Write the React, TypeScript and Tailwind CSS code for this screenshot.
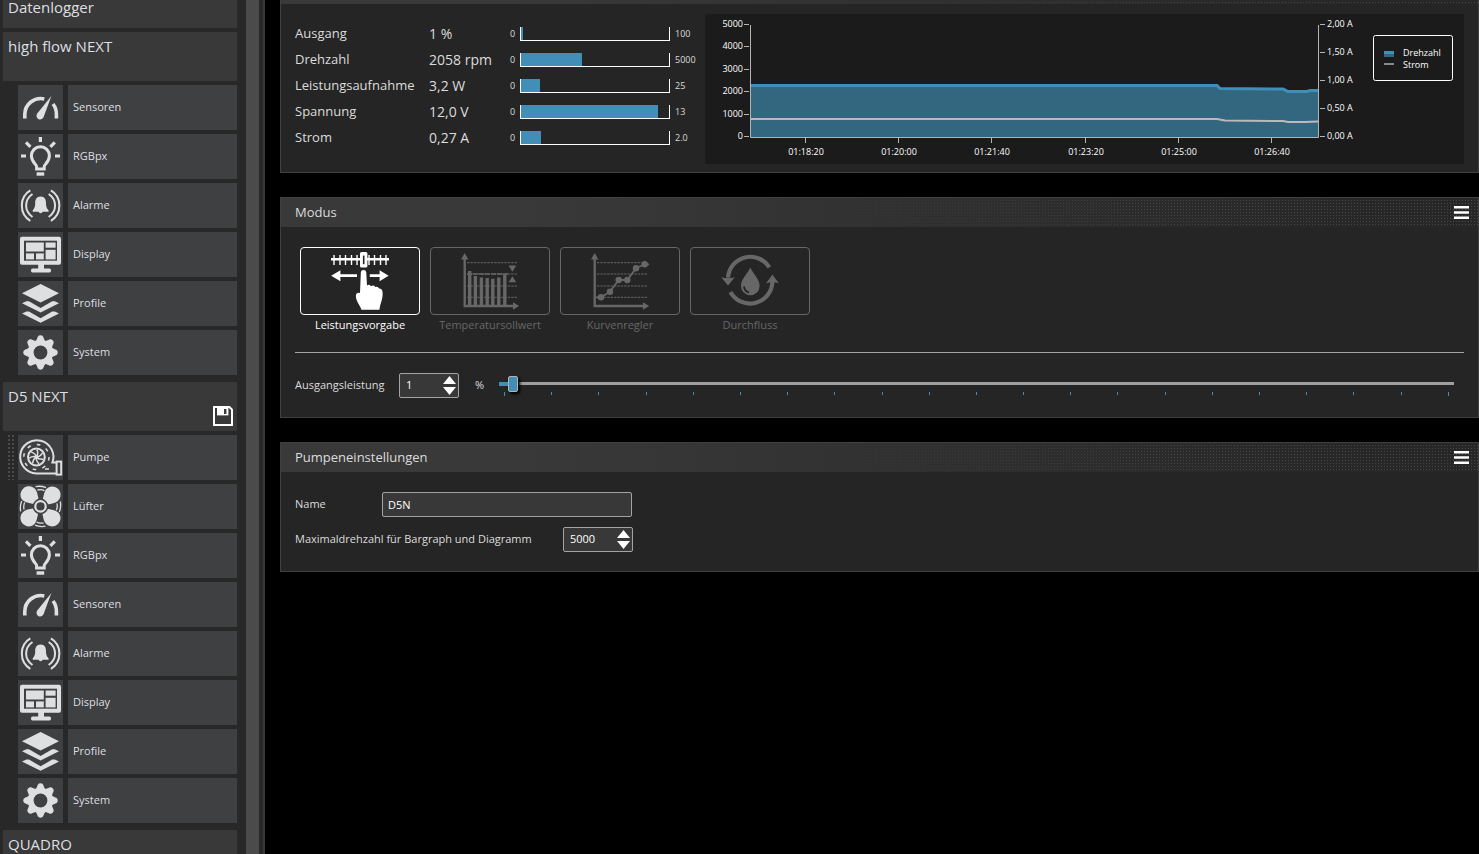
import { useState } from "react";
import type { ReactNode } from "react";

const GaugeIcon = () => (
  <svg viewBox="0 0 45 45" className="size-[45px]" fill="none" stroke="currentColor" strokeWidth="3.6">
    <path d="M6.8 33.5V29.5A16 16 0 0 1 26.3 13.9M35 19A16 16 0 0 1 38.4 29.5V33.5" />
    <path d="M33.4 11 25.8 31.6A3.7 3.7 0 1 1 19.2 28.6Z" fill="currentColor" stroke="none" />
  </svg>
);

const BulbIcon = () => (
  <svg viewBox="0 0 45 45" className="size-[45px]" fill="none" stroke="currentColor" strokeWidth="3">
    <path d="M18.6 35V32.5C18.6 30.5 13.4 28 13.4 21.7A9 9 0 0 1 31.4 21.7C31.4 28 26.2 30.5 26.2 32.5V35Z" />
    <path d="M18.6 40H26.2" strokeWidth="3.4" />
    <path d="M22.4 3V8M3 22H8M37 22H42M8 8.4 12.4 12.8M36.8 8.4 32.4 12.8" strokeWidth="3.2" />
  </svg>
);

const AlarmIcon = () => (
  <svg viewBox="0 0 45 45" className="size-[45px]" fill="none" stroke="currentColor" strokeWidth="2">
    <path d="M12.3 7.3C1 14 1 31 12.3 37.8M14.5 11C6 17 6 28 14.5 34M32.9 7.3C44.2 14 44.2 31 32.9 37.8M30.7 11C39.2 17 39.2 28 30.7 34" />
    <path
      d="M22.6 13.4C18.4 13.4 17.2 16.8 17.2 20C17.2 24 16.4 25.2 14.7 27.4V28.8H20.6A2.1 2.1 0 0 0 24.6 28.8H30.6V27.4C28.8 25.2 28 24 28 20C28 16.8 26.8 13.4 22.6 13.4Z"
      fill="currentColor"
      stroke="none"
    />
  </svg>
);

const DisplayIcon = () => (
  <svg viewBox="0 0 45 45" className="size-[45px]" fill="currentColor">
    <rect x="2" y="4.7" width="41" height="28" rx="2" />
    <rect x="6" y="8.7" width="33" height="20" className="fill-[#3f4042]" />
    <rect x="8" y="10.5" width="17.8" height="9" />
    <rect x="27.6" y="10.5" width="10" height="5.2" />
    <rect x="27.6" y="17.8" width="10" height="9.6" />
    <rect x="8" y="21.4" width="8" height="6" />
    <rect x="18" y="21.4" width="7.8" height="6" />
    <path d="M20.2 32H26V37H20.2Z" />
    <rect x="13" y="36.6" width="20" height="3.8" rx="1.6" />
  </svg>
);

const LayersIcon = () => (
  <svg viewBox="0 0 45 45" className="size-[45px]" fill="currentColor">
    <path d="M22.6 3 41 12.3 22.6 21.4 4 12.3Z" />
    <path d="M4 22.3 8.4 20.3H11L22.6 27 34.2 20.3H36.8L41 22.3 22.6 31.5Z" />
    <path d="M4 32.6 8.4 30.6H11L22.6 37.3 34.2 30.6H36.8L41 32.6 22.6 41.8Z" />
  </svg>
);

const GearIcon = () => (
  <svg viewBox="0 0 45 45" className="size-[45px]" fill="currentColor">
    <circle cx="22.5" cy="22.5" r="9.8" fill="none" stroke="currentColor" strokeWidth="5.8" />
    {[0, 45, 90, 135, 180, 225, 270, 315].map((a) => (
      <path key={a} d="M17.8 11.4 20 6.4Q20.6 5.3 22.5 5.3Q24.4 5.3 25 6.4L27.2 11.4Z" transform={`rotate(${a} 22.5 22.5)`} />
    ))}
  </svg>
);

const PumpIcon = () => (
  <svg viewBox="0 0 45 45" className="size-[45px]" fill="none" stroke="currentColor" strokeWidth="2">
    <path d="M38 38.5H18.4A16.6 16.6 0 1 1 34.4 27.6H38" />
    <rect x="38.6" y="26.6" width="4.6" height="13" />
    <circle cx="18.4" cy="22" r="8.4" />
    <circle cx="18.4" cy="22" r="12.6" strokeWidth="1.5" strokeDasharray="3.6 6.3" />
    <circle cx="18.4" cy="22" r="2" fill="currentColor" stroke="none" />
    {[0, 51, 103, 154, 206, 257, 309].map((a) => (
      <path key={a} d="M18.4 22Q20.6 19 19 14.6" strokeWidth="1.5" transform={`rotate(${a} 18.4 22)`} />
    ))}
    <path d="M27 34H31" strokeWidth="1.5" />
  </svg>
);

const FanIcon = () => (
  <svg viewBox="0 0 45 45" className="size-[45px]" fill="none" stroke="currentColor">
    {[0, 90, 180, 270].map((a) => (
      <g key={a} transform={`rotate(${a} 22.5 22.4)`}>
        <path
          d="M23 21C20 17 20.6 12 18.4 7C16 2 9.4 1 5.6 4.2C1.6 7.6 1.4 13.6 5.4 16.8C9.6 20 17 19 21 23Z"
          fill="currentColor"
          stroke="none"
        />
        <path d="M17.6 2.6Q23 1.6 28 3.6M19.4 6Q23 5 26.4 6.6" strokeWidth="1.3" />
      </g>
    ))}
    <circle cx="22.5" cy="22.4" r="7.8" className="fill-[#3f4042]" stroke="none" />
    <circle cx="22.5" cy="22.4" r="5.2" strokeWidth="2.2" />
  </svg>
);

const SaveIcon = () => (
  <svg viewBox="0 0 20 20" className="size-5" fill="none" stroke="#fff" strokeWidth="2">
    <path d="M1 1H16.4L19 3.6V19H1Z" />
    <path d="M4 1H15.4V9.4H4Z" fill="#fff" stroke="none" />
    <path d="M11 3H13.4V8H11Z" className="fill-[#393939]" stroke="none" />
  </svg>
);

const ManualIcon = () => (
  <svg viewBox="0 0 118 66" className="w-full" fill="currentColor" stroke="none">
    <path d="M30 11.2H88" stroke="currentColor" strokeWidth="2.6" />
    <path d="M33 7V17M39 7V17M44.5 7V17M50.5 7V17M56 7V17M68 7V17M73.5 7V17M79.5 7V17M85 7V17" stroke="currentColor" strokeWidth="1.4" />
    <rect x="59" y="4" width="7.4" height="15.6" rx="1.6" />
    <rect x="61.9" y="7.6" width="1.6" height="8.6" className="fill-[#252525]" />
    <path d="M30.2 27.7 39.4 22.2V26.3H56V29.1H39.4V33.2ZM87.6 27.7 78.6 22.2V26.3H68.8V29.1H78.6V33.2Z" />
    <path d="M59.8 25Q59.8 22 62.5 22Q65.2 22 65.3 25L66 37.4Q68 36 70 38.2Q72.6 36.6 74.4 39Q76.8 38 78.2 40.4Q81.4 40.4 81.6 44.6C82 51 79.4 55 78.4 61.8H60.4C59.6 57.6 54 52.6 55 46.4Q56 44 59 45Z" />
  </svg>
);

const Axes = () => (
  <>
    <path d="M33.7 9V58H84" fill="none" stroke="currentColor" strokeWidth="2.4" />
    <path d="M33.7 5 37.4 11.4H30ZM88.2 58 82 54.2V61.8Z" />
    <path d="M36 14.7H87M36 26H87M36 38H87M36 49.3H87" fill="none" stroke="currentColor" strokeWidth="1" strokeDasharray="2.4 1" />
  </>
);

const TargetIcon = () => (
  <svg viewBox="0 0 118 66" className="w-full" fill="currentColor">
    <Axes />
    <path
      d="M38.7 57V23M44.4 57V28M50.4 57V29.4M56.2 57V30M61.8 57V30.8M67.8 57V29.4M73.8 57V26.4"
      stroke="currentColor"
      strokeWidth="3.4"
    />
    <path d="M36 26H78" stroke="currentColor" strokeWidth="1.4" strokeDasharray="5 1" />
    <path d="M77.6 17.4H85.2L81.4 23.8ZM77.6 34.2H85.2L81.4 28.2Z" />
  </svg>
);

const CurveIcon = () => (
  <svg viewBox="0 0 118 66" className="w-full" fill="currentColor">
    <Axes />
    <path d="M35 49.3H40L49 43.7 57.7 32H66.3L75 20.3 83.7 16.3H88" fill="none" stroke="currentColor" strokeWidth="1.8" />
    <circle cx="40" cy="49.3" r="3.2" />
    <circle cx="49" cy="43.7" r="3.2" />
    <circle cx="57.7" cy="32" r="3.2" />
    <circle cx="66.3" cy="32" r="3.2" />
    <circle cx="75" cy="20.3" r="3.2" />
    <circle cx="83.7" cy="16.3" r="3.2" />
  </svg>
);

const FlowIcon = () => (
  <svg viewBox="0 0 118 66" className="w-full" fill="currentColor">
    <path d="M78.4 19.4A22.4 22.4 0 0 0 37 29.6M39.4 44A22.4 22.4 0 0 0 81.4 34" fill="none" stroke="currentColor" strokeWidth="4.2" />
    <path d="M30.2 29.2Q36.8 31 43.8 29.2L37 37.6ZM75 35.4Q81.4 33 88 35.4L81.4 26.6Z" />
    <path d="M59.3 19.6C62 26 68.6 31 68.6 38A9.3 9.3 0 0 1 50 38C50 31 56.6 26 59.3 19.6Z" />
    <path d="M53 38.4Q53.4 43.4 58 44.4" fill="none" stroke="#252525" strokeWidth="1.8" />
  </svg>
);

type NavEntry = { label: string; icon: () => ReactNode };

const highFlow: NavEntry[] = [
  { label: "Sensoren", icon: GaugeIcon },
  { label: "RGBpx", icon: BulbIcon },
  { label: "Alarme", icon: AlarmIcon },
  { label: "Display", icon: DisplayIcon },
  { label: "Profile", icon: LayersIcon },
  { label: "System", icon: GearIcon },
];

const d5Next: NavEntry[] = [
  { label: "Pumpe", icon: PumpIcon },
  { label: "Lüfter", icon: FanIcon },
  { label: "RGBpx", icon: BulbIcon },
  { label: "Sensoren", icon: GaugeIcon },
  { label: "Alarme", icon: AlarmIcon },
  { label: "Display", icon: DisplayIcon },
  { label: "Profile", icon: LayersIcon },
  { label: "System", icon: GearIcon },
];

const DeviceHeader = ({ name, children }: { name: string; children?: ReactNode }) => (
  <div className="flex h-[49px] shrink-0 justify-between bg-[#393939] pl-[5px] pr-1 pt-1">
    <h2 className="text-[15px] leading-5">{name}</h2>
    {children}
  </div>
);

const NavRow = ({ entry, active }: { entry: NavEntry; active?: boolean }) => {
  const Icon = entry.icon;
  return (
    <li className="flex">
      <span
        className={
          active
            ? "ml-[5px] mr-1 w-[6px] bg-[conic-gradient(at_2px_2px,transparent_75%,#4a4a4a_0)] bg-size-[4px_4px]"
            : "ml-[5px] mr-1 w-[6px]"
        }
      />
      <a href="#" className="flex flex-1 gap-[5px] text-[11px]">
        <span className="size-[45px] bg-[#3f4042]">
          <Icon />
        </span>
        <span className="flex flex-1 items-center bg-[#3f4042] px-[5px]">{entry.label}</span>
      </a>
    </li>
  );
};

const Sidebar = () => (
  <aside className="flex w-[265px] shrink-0 overflow-hidden border-r-2 border-[#383838] bg-[#282828] text-[#dedfe1]">
    <nav className="flex flex-1 flex-col gap-1 pl-[3px] pr-[9px]">
      <div className="h-7 shrink-0 bg-[#393939] px-[5px]">
        <h2 className="text-[15px] leading-[14px]">Datenlogger</h2>
      </div>
      <DeviceHeader name="high flow NEXT" />
      <ul className="mb-[3px] flex flex-col gap-1">
        {highFlow.map((e) => (
          <NavRow key={e.label} entry={e} />
        ))}
      </ul>
      <DeviceHeader name="D5 NEXT">
        <button type="button" aria-label="Speichern" className="self-end pb-[5px]">
          <SaveIcon />
        </button>
      </DeviceHeader>
      <ul className="mb-[3px] flex flex-col gap-1">
        {d5Next.map((e, i) => (
          <NavRow key={e.label} entry={e} active={i === 0} />
        ))}
      </ul>
      <DeviceHeader name="QUADRO" />
    </nav>
    <div className="mr-1 w-[13px] bg-[#4b4b4b]" />
  </aside>
);

const headerFill = "bg-linear-to-r from-[#393939] from-20% to-[#272727] to-90%";
const headerDots =
  "absolute inset-0 bg-[conic-gradient(at_2px_2px,transparent_25%,#474747_0_50%,transparent_0)] bg-size-[3px_3px] [mask-image:linear-gradient(to_right,transparent_40%,#000_80%)]";

const Panel = ({ title, children }: { title: string; children: ReactNode }) => (
  <section className="border border-[#404040] bg-[#252525]">
    <header className={`relative flex h-[29px] items-center justify-between pl-[14px] pr-[9px] ${headerFill}`}>
      <div className={headerDots} />
      <h2 className="relative text-[13px]">{title}</h2>
      <button type="button" aria-label="Menü" className="relative">
        <svg viewBox="0 0 15 13" className="h-[13px] w-[15px]" fill="#fff">
          <path d="M0 0H15V2.4H0ZM0 5.3H15V7.7H0ZM0 10.6H15V13H0Z" />
        </svg>
      </button>
    </header>
    {children}
  </section>
);

const readings = [
  { label: "Ausgang", value: "1 %", amount: 1, max: 100, maxLabel: "100" },
  { label: "Drehzahl", value: "2058 rpm", amount: 2058, max: 5000, maxLabel: "5000" },
  { label: "Leistungsaufnahme", value: "3,2 W", amount: 3.2, max: 25, maxLabel: "25" },
  { label: "Spannung", value: "12,0 V", amount: 12, max: 13, maxLabel: "13" },
  { label: "Strom", value: "0,27 A", amount: 0.27, max: 2, maxLabel: "2.0" },
];

const Readings = () => (
  <table className="mt-[7px] w-[410px] shrink-0 table-fixed self-start">
    <tbody>
      {readings.map((r) => (
        <tr key={r.label} className="h-[26px]">
          <th scope="row" className="w-[134px] p-0 text-left text-[13px] font-normal">
            {r.label}
          </th>
          <td className="w-[76px] p-0 text-sm">{r.value}</td>
          <td className="p-0 text-[9px]">
            <div className="flex items-center">
              <span className="w-[15px] pl-[5px]">0</span>
              <div className="h-[14px] w-[150px] border-x border-b border-white">
                <div className="h-full min-w-[2px] bg-[#418fb7]" style={{ width: `${(r.amount / r.max) * 100}%` }} />
              </div>
              <span className="pl-[5px]">{r.maxLabel}</span>
            </div>
          </td>
        </tr>
      ))}
    </tbody>
  </table>
);

const speedTicks = ["5000", "4000", "3000", "2000", "1000", "0"];
const currentTicks = ["2,00 A", "1,50 A", "1,00 A", "0,50 A", "0,00 A"];
const timeTicks = ["01:18:20", "01:20:00", "01:21:40", "01:23:20", "01:25:00", "01:26:40"];

const speedLine = "46,71.5 512,71.5 515,74.5 578,75 583,77.5 602,77.5 605,76.5 613,76.5";

const Chart = () => (
  <div className="flex-1 rounded-xs bg-[#1b1b1b]">
    <svg viewBox="0 0 759 150" className="w-full text-[9px]" fill="#fff">
      <polygon points={`46,123 ${speedLine} 613,123`} fill="#33667f" />
      <polyline points={speedLine} fill="none" stroke="#3f90b8" strokeWidth="3" />
      <polyline points="46,105 512,105 520,106.5 578,107 583,108 600,108 613,107.5" fill="none" stroke="#bcb8bc" strokeWidth="2" />
      <path d="M45.5 11V123.5H613.5V11" fill="none" stroke="#b4b4b4" />
      {speedTicks.map((t, i) => (
        <g key={t}>
          <path d={`M39 ${10.5 + Math.round(i * 22.4)}h5`} stroke="#b4b4b4" />
          <text x="38" y={13 + Math.round(i * 22.4)} textAnchor="end">
            {t}
          </text>
        </g>
      ))}
      {currentTicks.map((t, i) => (
        <g key={t}>
          <path d={`M615 ${10.5 + i * 28}h5`} stroke="#b4b4b4" />
          <text x="622" y={13 + i * 28}>
            {t}
          </text>
        </g>
      ))}
      {timeTicks.map((t, i) => (
        <g key={t}>
          <path d={`M${100.5 + Math.round(i * 93.2)} 124v5`} stroke="#b4b4b4" />
          <text x={101 + Math.round(i * 93.2)} y="141" textAnchor="middle">
            {t}
          </text>
        </g>
      ))}
      <rect x="668.5" y="21.5" width="79" height="45" rx="2" fill="none" stroke="#fff" />
      <rect x="679" y="37" width="10" height="6" fill="#33667f" />
      <rect x="679" y="37" width="10" height="3" fill="#3f90b8" />
      <rect x="679" y="49" width="10" height="2" fill="#8a8a8a" />
      <text x="698" y="42">Drehzahl</text>
      <text x="698" y="54">Strom</text>
    </svg>
  </div>
);

const modes = [
  { label: "Leistungsvorgabe", icon: ManualIcon },
  { label: "Temperatursollwert", icon: TargetIcon },
  { label: "Kurvenregler", icon: CurveIcon },
  { label: "Durchfluss", icon: FlowIcon },
];

type SpinProps = { id: string; value: number; max: number; className: string; onChange: (v: number) => void };

const SpinBox = ({ id, value, max, className, onChange }: SpinProps) => {
  const set = (v: number) => onChange(Math.min(max, Math.max(0, v)));
  return (
    <div className={`flex h-[25px] rounded-xs border border-[#a3a3a3] bg-[#383838] text-white ${className}`}>
      <input
        id={id}
        type="number"
        value={value}
        onChange={(e) => set(Number(e.target.value))}
        className="min-w-0 flex-1 appearance-none pl-[6px] text-[11px] outline-none [-moz-appearance:textfield] [&::-webkit-inner-spin-button]:appearance-none"
      />
      <div className="flex flex-col justify-center gap-[3px] pr-[2px]">
        <button type="button" aria-label="Erhöhen" onClick={() => set(value + 1)}>
          <svg viewBox="0 0 13 8" className="h-2 w-[13px]" fill="#fff">
            <path d="M6.5 0 13 8H0Z" />
          </svg>
        </button>
        <button type="button" aria-label="Verringern" onClick={() => set(value - 1)}>
          <svg viewBox="0 0 13 8" className="h-2 w-[13px]" fill="#fff">
            <path d="M6.5 8 13 0H0Z" />
          </svg>
        </button>
      </div>
    </div>
  );
};

const PowerSlider = ({ value, onChange }: { value: number; onChange: (v: number) => void }) => (
  <div className="relative flex-1">
    <input
      type="range"
      aria-label="Ausgangsleistung in Prozent"
      min={0}
      max={100}
      value={value}
      onChange={(e) => onChange(Number(e.target.value))}
      className="block h-4 w-full appearance-none bg-[linear-gradient(#a09e9f,#a09e9f)] bg-size-[100%_3px] bg-center bg-no-repeat [&::-webkit-slider-thumb]:h-4 [&::-webkit-slider-thumb]:w-[10px] [&::-webkit-slider-thumb]:appearance-none [&::-webkit-slider-thumb]:rounded-xs [&::-webkit-slider-thumb]:border [&::-webkit-slider-thumb]:border-[#b4b4b4] [&::-webkit-slider-thumb]:bg-[#418fb7] [&::-webkit-slider-thumb]:shadow-[2px_2px_3px_#000]"
    />
    <span
      className="pointer-events-none absolute left-0 top-[6px] h-1 bg-[#418fb7]"
      style={{ width: `calc((100% - 10px) * ${value / 100})` }}
    />
    <div className="flex h-1 justify-between px-[5px]">
      {Array.from({ length: 21 }, (_, i) => (
        <span key={i} className={i % 20 === 0 ? "h-1 w-px bg-[#3f90b8]" : "h-[3px] w-px bg-[#3f90b8]"} />
      ))}
    </div>
  </div>
);

const App = () => {
  const [mode, setMode] = useState("Leistungsvorgabe");
  const [power, setPower] = useState(1);
  const [maxSpeed, setMaxSpeed] = useState(5000);
  const [name, setName] = useState("D5N");

  return (
    <div className="flex h-screen overflow-hidden bg-black font-['Open_Sans','Noto_Sans',sans-serif] text-[#dcdcdc]">
      <Sidebar />
      <main className="flex flex-1 flex-col gap-6 pl-[15px]">
        <section className="border border-t-0 border-[#404040] bg-[#252525]">
          <div className={`relative h-1 ${headerFill}`}>
            <div className={headerDots} />
          </div>
          <div className="flex px-[14px] pb-2 pt-[10px]">
            <Readings />
            <Chart />
          </div>
        </section>

        <Panel title="Modus">
          <div className="px-[14px] pb-[19px] pt-5">
            <div className="flex gap-[10px] px-[5px]">
              {modes.map(({ label, icon: Icon }) => (
                <button
                  key={label}
                  type="button"
                  aria-pressed={mode === label}
                  onClick={() => setMode(label)}
                  className={
                    mode === label ? "w-[120px] text-[11px]/4 text-white" : "w-[120px] text-[11px]/4 text-[#676767]"
                  }
                >
                  <span className="block h-[68px] rounded-[4px] border border-current">
                    <Icon />
                  </span>
                  <span className="mt-[2px] block">{label}</span>
                </button>
              ))}
            </div>
            <hr className="mt-[19px] border-[#a3a3a3]" />
            <div className="mt-5 flex items-center">
              <label htmlFor="power" className="w-[104px] text-[11px]">
                Ausgangsleistung
              </label>
              <SpinBox id="power" value={power} max={100} onChange={setPower} className="w-[60px]" />
              <span className="w-10 pl-4 text-[11px]">%</span>
              <div className="flex flex-1 pr-[10px]">
                <PowerSlider value={power} onChange={setPower} />
              </div>
            </div>
          </div>
        </Panel>

        <Panel title="Pumpeneinstellungen">
          <div className="flex flex-col gap-[10px] px-[14px] pb-[19px] pt-5 text-[11px]">
            <div className="flex items-center">
              <label htmlFor="name" className="w-[87px]">
                Name
              </label>
              <input
                id="name"
                type="text"
                value={name}
                onChange={(e) => setName(e.target.value)}
                className="h-[25px] w-[250px] rounded-xs border border-[#a3a3a3] bg-[#383838] px-[5px] text-white outline-none"
              />
            </div>
            <div className="flex items-center">
              <label htmlFor="max-speed" className="w-[268px]">
                Maximaldrehzahl für Bargraph und Diagramm
              </label>
              <SpinBox id="max-speed" value={maxSpeed} max={9999} onChange={setMaxSpeed} className="w-[70px]" />
            </div>
          </div>
        </Panel>
      </main>
    </div>
  );
};

export default App;
